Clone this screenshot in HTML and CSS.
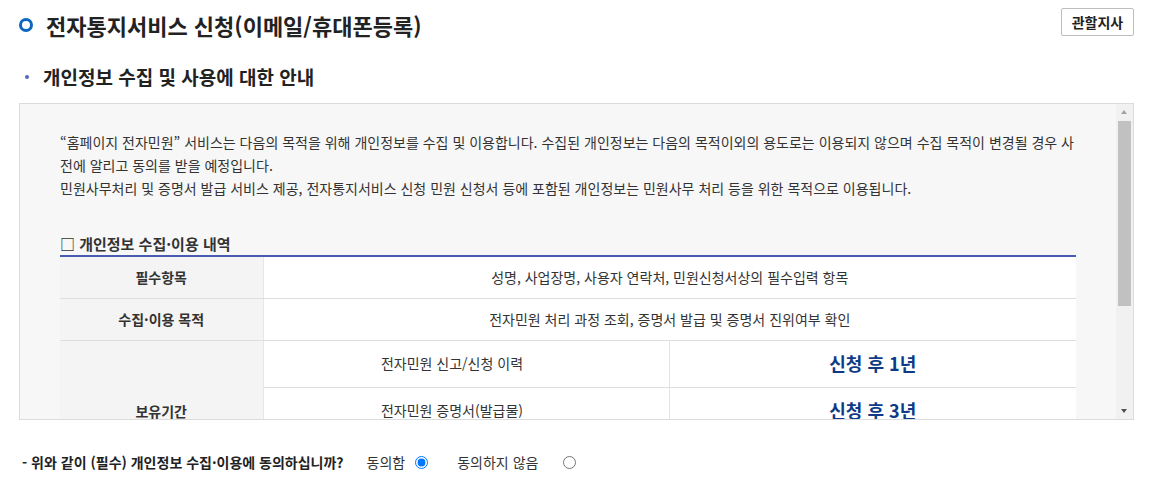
FILE: index.html
```html
<!DOCTYPE html>
<html lang="ko">
<head>
<meta charset="utf-8">
<title>전자통지서비스 신청</title>
<link rel="stylesheet" href="styles.css">
</head>
<body>
<div class="page">
  <header class="title-row">
    <h1 class="title"><span class="ring"></span>전자통지서비스 신청(이메일/휴대폰등록)</h1>
    <button class="btn" type="button">관할지사</button>
  </header>

  <h2 class="subtitle"><span class="dot"></span>개인정보 수집 및 사용에 대한 안내</h2>

  <div class="scrollbox">
    <div class="scroll-content">
      <p class="intro">“홈페이지 전자민원” 서비스는 다음의 목적을 위해 개인정보를 수집 및 이용합니다. 수집된 개인정보는 다음의 목적이외의 용도로는 이용되지 않으며 수집 목적이 변경될 경우 사전에 알리고 동의를 받을 예정입니다.<br>민원사무처리 및 증명서 발급 서비스 제공, 전자통지서비스 신청 민원 신청서 등에 포함된 개인정보는 민원사무 처리 등을 위한 목적으로 이용됩니다.</p>

      <h3 class="tbl-title">□ 개인정보 수집·이용 내역</h3>
      <table class="info">
        <colgroup>
          <col class="c1"><col class="c2"><col class="c3">
        </colgroup>
        <tbody>
          <tr class="r1">
            <th>필수항목</th>
            <td colspan="2">성명, 사업장명, 사용자 연락처, 민원신청서상의 필수입력 항목</td>
          </tr>
          <tr class="r2">
            <th>수집·이용 목적</th>
            <td colspan="2">전자민원 처리 과정 조회, 증명서 발급 및 증명서 진위여부 확인</td>
          </tr>
          <tr class="r3">
            <th rowspan="3">보유기간</th>
            <td class="item">전자민원 신고/신청 이력</td>
            <td class="year">신청 후 1년</td>
          </tr>
          <tr class="r3">
            <td class="item">전자민원 증명서(발급물)</td>
            <td class="year">신청 후 3년</td>
          </tr>
          <tr class="r3">
            <td class="item">전자통지서비스 신청 정보</td>
            <td class="year">해지 시까지</td>
          </tr>
        </tbody>
      </table>
    </div>
    <div class="scrollbar">
      <span class="arrow up"></span>
      <span class="thumb"></span>
      <span class="track"></span>
      <span class="arrow down"></span>
    </div>
  </div>

  <div class="agree">
    <span class="question">- 위와 같이 (필수) 개인정보 수집·이용에 동의하십니까?</span>
    <label class="opt opt-yes">동의함<input type="radio" name="agree" checked></label>
    <label class="opt opt-no">동의하지 않음<input type="radio" name="agree"></label>
  </div>
</div>
</body>
</html>
```

FILE: styles.css
```css
* { box-sizing: border-box; }

html, body {
  margin: 0;
  padding: 0;
  background: #fff;
}

body {
  font-family: "Noto Sans CJK KR", "Noto Sans", sans-serif;
  color: #333;
  font-size: 14px;
}

.page {
  width: 1152px;
  padding: 0 18px 0 19px;
}

/* title row */
.title-row {
  display: flex;
  justify-content: space-between;
  align-items: flex-start;
}

.title {
  display: flex;
  align-items: center;
  margin: 10px 0 0 0;
  font-size: 22px;
  line-height: 30px;
  font-weight: 700;
  color: #222;
}

.ring {
  width: 14px;
  height: 14px;
  border: 3px solid #0b67c2;
  border-radius: 50%;
  margin-right: 13px;
  flex: none;
}

.btn {
  margin-top: 8px;
  width: 73px;
  height: 28px;
  padding: 0;
  background: #fff;
  border: 1px solid #bdbdbd;
  border-radius: 2px;
  font-family: inherit;
  font-size: 14px;
  font-weight: 700;
  color: #222;
  line-height: 26px;
}

/* subtitle */
.subtitle {
  display: flex;
  align-items: center;
  margin: 24px 0 0 0;
  font-size: 19px;
  line-height: 26px;
  font-weight: 700;
  color: #222;
}

.dot {
  width: 4px;
  height: 4px;
  border-radius: 50%;
  background: #5568bb;
  margin: 0 14px 0 6px;
  flex: none;
}

/* scroll box */
.scrollbox {
  display: flex;
  margin-top: 13px;
  height: 317px;
  border: 1px solid #dcdcdc;
  background: #f7f7f7;
}

.scroll-content {
  flex: 1;
  overflow: hidden;
  padding: 27px 40px 0 40px;
}

.intro {
  margin: 0;
  line-height: 23px;
  color: #333;
}

.tbl-title {
  margin: 33px 0 1px 0;
  font-size: 15px;
  line-height: 21px;
  font-weight: 700;
  color: #333;
}

.info {
  width: 100%;
  border-collapse: collapse;
  table-layout: fixed;
  border-top: 2px solid #4a5cb2;
}

.c1 { width: 203px; }
.c2 { width: 406px; }

.info th,
.info td {
  padding: 0;
  text-align: center;
  vertical-align: middle;
  border-bottom: 1px solid #dedede;
  font-size: 14px;
  color: #333;
}

.info th {
  background: #f4f4f4;
  font-weight: 700;
  border-right: 1px solid #e6e6e6;
}

.info td {
  background: #fff;
}

.info td.item {
  padding: 0 28px 2px 0;
  border-right: 1px solid #e3e3e3;
}

.info td.year {
  padding-bottom: 2px;
  font-size: 18px;
  font-weight: 700;
  color: #0e3a87;
}

.r1 > * { height: 42px; }
.r2 > * { height: 42px; }
.r3 > * { height: 47px; }

/* fake scrollbar */
.scrollbar {
  width: 17px;
  flex: none;
  display: flex;
  flex-direction: column;
  align-items: center;
  background: #f1f1f1;
}

.arrow {
  height: 17px;
  width: 17px;
  flex: none;
  position: relative;
}

.arrow::after {
  content: "";
  position: absolute;
  left: 5px;
  width: 0;
  height: 0;
  border-left: 3.5px solid transparent;
  border-right: 3.5px solid transparent;
}

.arrow.up::after {
  top: 6px;
  border-bottom: 4px solid #a3a3a3;
}

.arrow.down::after {
  top: 7px;
  border-top: 4px solid #505050;
}

.thumb {
  width: 13px;
  height: 185px;
  background: #c1c1c1;
  flex: none;
}

.track {
  flex: 1;
}

/* agree row */
.agree {
  display: flex;
  align-items: center;
  margin-top: 32px;
  padding-left: 3px;
  line-height: 20px;
  font-size: 14px;
  color: #333;
}

.question {
  font-weight: 700;
  color: #222;
  margin-right: 23px;
}

.opt {
  display: flex;
  align-items: center;
}

.opt-yes {
  gap: 10px;
  margin-right: 29px;
}

.opt-no {
  gap: 25px;
}

.opt input {
  margin: 0;
  width: 13px;
  height: 13px;
}
```
